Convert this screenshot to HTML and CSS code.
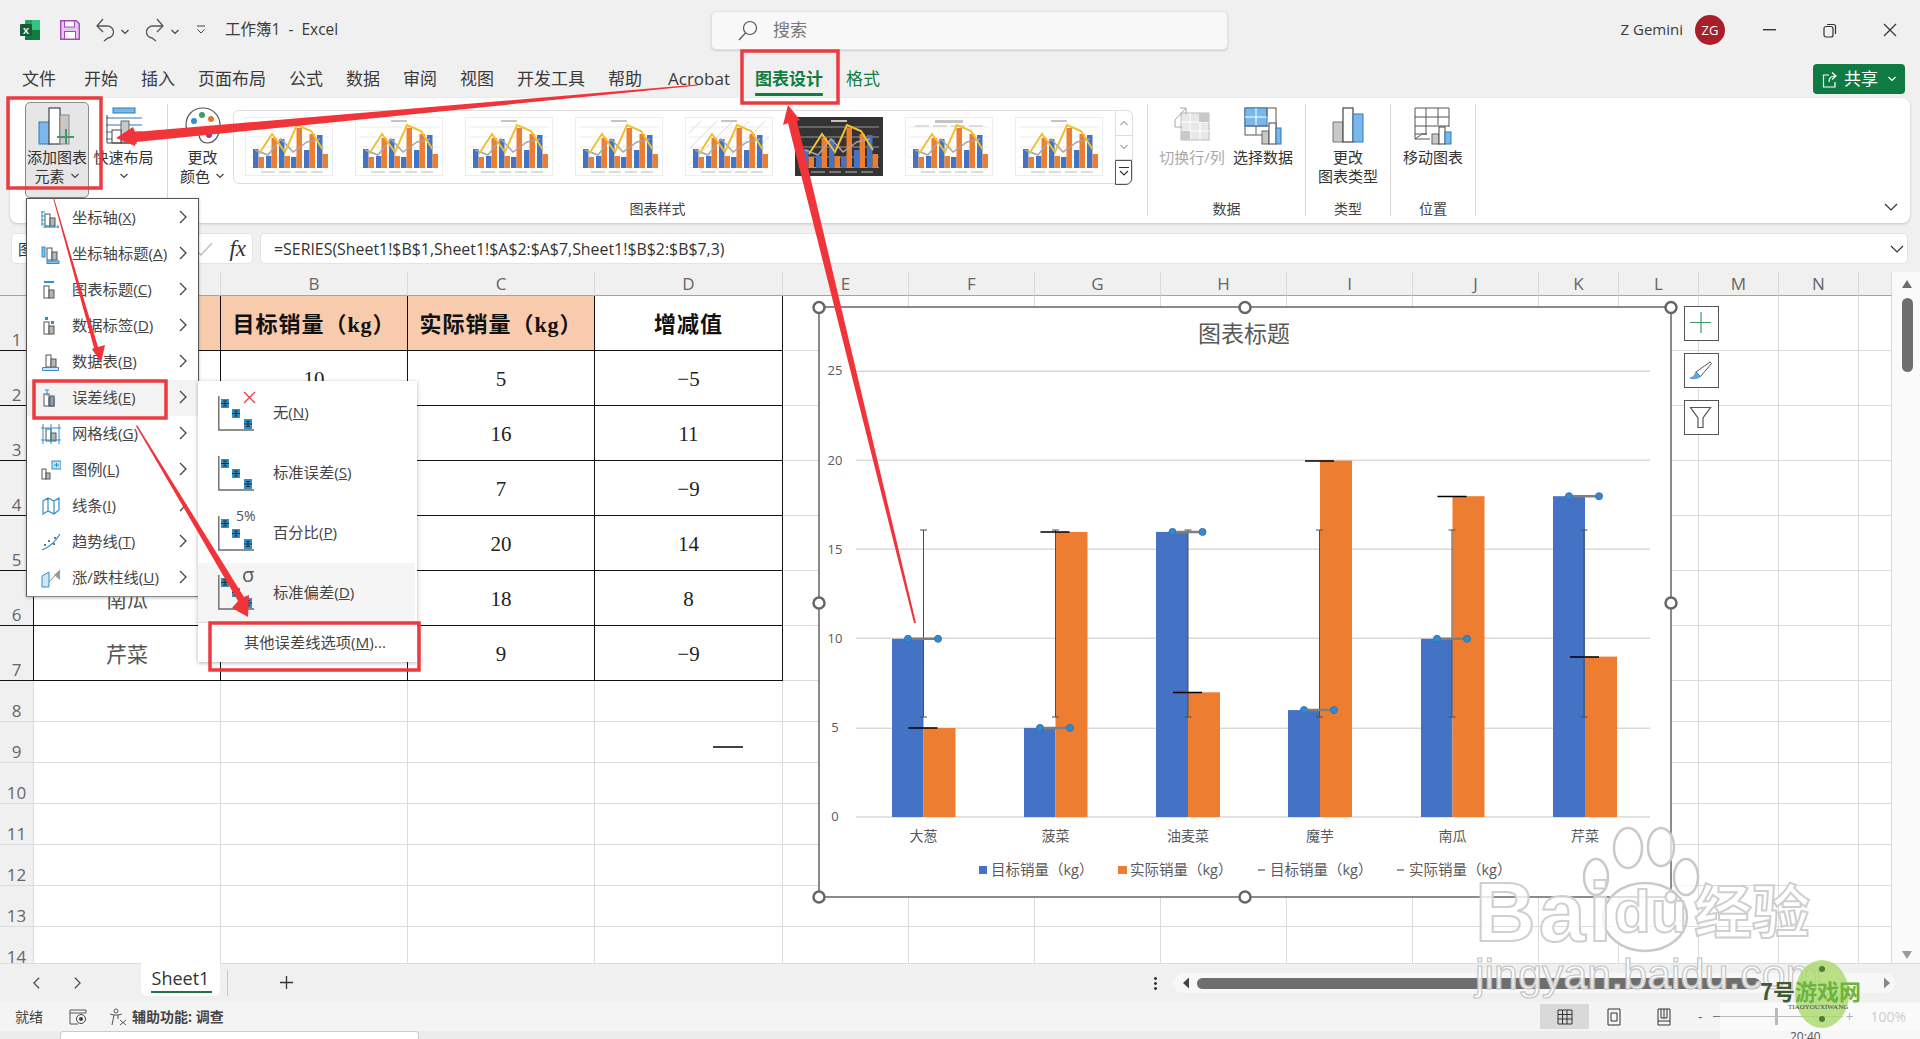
FILE: index.html
```html
<!DOCTYPE html>
<html lang="zh-CN">
<head>
<meta charset="utf-8">
<title>工作簿1 - Excel</title>
<link rel="stylesheet" href="styles.css">
</head>
<body>
<svg class="defs" width="0" height="0" aria-hidden="true">
  <defs>
    <symbol id="chev" viewBox="0 0 10 16"><path d="M2 2l6 6-6 6" fill="none" stroke="#444" stroke-width="1.3"/></symbol>
    <symbol id="caret" viewBox="0 0 10 6"><path d="M1.5 1l3.5 3.5L8.5 1" fill="none" stroke="#444" stroke-width="1.2"/></symbol>
    <symbol id="tb" viewBox="0 0 88 59">
      <g stroke="#dedede" stroke-width=".6"><path d="M4 10h80M4 20h80M4 30h80M4 40h80M4 50.500h80"/></g>
      <g fill="#4472c4"><rect x="8" y="32" width="5.500" height="19"/><rect x="21" y="39" width="5.500" height="12"/><rect x="34" y="22" width="5.500" height="29"/><rect x="46" y="40" width="5.500" height="11"/><rect x="59" y="33" width="5.500" height="18"/><rect x="72" y="18" width="5.500" height="33"/></g>
      <g fill="#ed7d31"><rect x="13.500" y="40" width="5.500" height="11"/><rect x="26.500" y="21" width="5.500" height="30"/><rect x="39.500" y="39" width="5.500" height="12"/><rect x="51.500" y="11" width="5.500" height="40"/><rect x="64.500" y="17" width="5.500" height="34"/><rect x="77.500" y="37" width="5.500" height="14"/></g>
      <path d="M10 33l13 5 13-16 12 13 14-10 13-3" fill="none" stroke="#a5a5a5" stroke-width="1.500"/>
      <path d="M14 37l13-20 13 18 12-27 14 6 12 19" fill="none" stroke="#efc033" stroke-width="2"/>
      <path d="M16 55h14M34 55h12M50 55h12M66 55h12" stroke="#bbb" stroke-width="1"/>
    </symbol>
    <symbol id="ebars" viewBox="0 0 37 35">
      <path d="M.8 0v34H36" fill="none" stroke="#6a6a6a" stroke-width="1.4"/>
      <g fill="#2f8fc8"><rect x="3" y="3" width="8" height="9"/><rect x="14" y="13" width="8" height="9"/><rect x="26" y="23" width="8" height="10"/></g>
      <path d="M3 7.500h8M7 5.500v4M5 5h4M5 10h4M14 17.500h8M18 15.500v4M16 15h4M16 20h4M26 28h8M30 26v4M28 25.500h4M28 30.500h4" stroke="#222" stroke-width=".9"/>
    </symbol>
    <symbol id="miniBars" viewBox="0 0 20 20">
      <rect x="4" y="6" width="5" height="12" fill="#fff" stroke="#555"/><rect x="9" y="10" width="5" height="8" fill="#b5b5b5" stroke="#555"/>
    </symbol>
    <symbol id="m1" viewBox="0 0 20 20"><use href="#miniBars"/><path d="M1 3v15M.5 4H4M.5 8H4M.5 12H4M.5 16H4M2 19h16M5 17v3M9 17v3M13 17v3M17 17v3" stroke="#2f8fc8" fill="none"/></symbol>
    <symbol id="m2" viewBox="0 0 20 20"><use href="#miniBars" x="2" y="-2"/><rect x="1" y="3" width="3" height="10" fill="#7ec0ee" stroke="#2f8fc8"/><rect x="6" y="17" width="12" height="2.500" fill="#7ec0ee" stroke="#2f8fc8"/></symbol>
    <symbol id="m3" viewBox="0 0 20 20"><use href="#miniBars" x="-1"/><path d="M3 2h10" stroke="#2f8fc8" stroke-width="2"/></symbol>
    <symbol id="m4" viewBox="0 0 20 20"><use href="#miniBars" x="-1"/><rect x="4" y="1" width="3" height="3" fill="#2f8fc8"/><rect x="10" y="5" width="3" height="3" fill="#2f8fc8"/></symbol>
    <symbol id="m5" viewBox="0 0 20 20"><use href="#miniBars" x="1" y="-3"/><path d="M1.500 15.500h16v3h-16z" fill="#cfe6f7" stroke="#2f8fc8"/></symbol>
    <symbol id="m6" viewBox="0 0 20 20"><use href="#miniBars" x="-1"/><path d="M6 2v6M4 2h4" stroke="#2f8fc8"/><rect x="9" y="8" width="4" height="10" fill="#7aa7c7" stroke="#555"/></symbol>
    <symbol id="m7" viewBox="0 0 20 20"><use href="#miniBars" x="1" y="-1"/><path d="M0 4h20M0 16h20M2 0v20M10 0v20M18 0v20" stroke="#2f8fc8" fill="none"/></symbol>
    <symbol id="m8" viewBox="0 0 20 20"><rect x="1" y="9" width="4" height="10" fill="#fff" stroke="#555"/><rect x="5" y="13" width="4" height="6" fill="#b5b5b5" stroke="#555"/><rect x="11" y="1" width="9" height="8" fill="#bfe0f7" stroke="#2f8fc8"/><path d="M13 5h5M15.500 3v4" stroke="#2f8fc8"/></symbol>
    <symbol id="m9" viewBox="0 0 20 20"><path d="M2 5l5-3 6 3 5-3v12l-5 4-6-3-5 3zM7 2v13M13 5v13" fill="none" stroke="#2f8fc8" stroke-width="1.200"/></symbol>
    <symbol id="m10" viewBox="0 0 20 20"><path d="M1 18C8 15 14 11 19 2" fill="none" stroke="#2f8fc8" stroke-width="1.200"/><g fill="#444"><circle cx="4" cy="13" r="1"/><circle cx="8" cy="9" r="1"/><circle cx="13" cy="12" r="1"/><circle cx="14" cy="6" r="1"/></g></symbol>
    <symbol id="m11" viewBox="0 0 20 20"><path d="M1 8l7-4v15H1z" fill="#cfe6f7" stroke="#2f8fc8"/><path d="M8 14l11-12" stroke="#888"/><path d="M13 7l6-5v10z" fill="#999"/></symbol>
  </defs>
</svg>

<div class="app">
  <header class="titlebar">
    <div class="tb-left">
      <svg class="ic-excel" width="20" height="20" viewBox="0 0 20 20"><rect x="5" width="15" height="20" rx="1" fill="#21a366"/><rect x="5" y="10" width="15" height="10" fill="#107c41"/><rect x="12" width="8" height="10" fill="#33c481"/><rect y="4" width="12" height="12" rx="1" fill="#185c37"/><text x="3" y="13.500" class="xl">X</text></svg>
      <svg class="ic-save" width="20" height="20" viewBox="0 0 20 20"><path d="M.7.7h15.500l3.100 3.100v15.500H.7z" fill="#e5c6ef" stroke="#a349b8" stroke-width="1.400"/><rect x="4.500" y="1" width="10" height="6" fill="#fff" stroke="#a349b8"/><rect x="4.500" y="11.500" width="11" height="7.500" fill="#fff" stroke="#a349b8"/></svg>
      <svg class="ic-undo" width="18" height="24" viewBox="0 0 18 24"><path d="M1 8h10a6 6 0 0 1 1 12l-4 3M7 1L1 8l6 6" fill="none" stroke="#555" stroke-width="1.300"/></svg>
      <svg class="cr c1" width="10" height="6"><use href="#caret"/></svg>
      <svg class="ic-undo r" width="18" height="24" viewBox="0 0 18 24"><path d="M17 8H7a6 6 0 0 0-1 12l4 3M11 1l6 7-6 6" fill="none" stroke="#555" stroke-width="1.300"/></svg>
      <svg class="cr c1" width="10" height="6"><use href="#caret"/></svg>
      <svg class="cr c2" width="10" height="10" viewBox="0 0 10 10"><path d="M1 1h8M1.500 4.500L5 8l3.500-3.500" fill="none" stroke="#444"/></svg>
      <span class="doc">工作簿1&nbsp; - &nbsp;Excel</span>
    </div>
    <div class="search">
      <svg width="20" height="22" viewBox="0 0 20 22"><circle cx="12" cy="8" r="6.500" fill="none" stroke="#555" stroke-width="1.200"/><path d="M7.500 13L1 20" stroke="#555" stroke-width="1.200"/></svg>
      <span>搜索</span>
    </div>
    <div class="tb-right">
      <span class="user">Z Gemini</span>
      <span class="avatar">ZG</span>
      <span class="winbtn"><svg width="14" height="2"><rect width="13" height="1.400" fill="#333"/></svg></span>
      <span class="winbtn"><svg width="14" height="15" viewBox="0 0 14 15"><rect x="1" y="3.500" width="9" height="10.500" rx="2" fill="none" stroke="#333" stroke-width="1.200"/><path d="M4 1.500h6.500a2 2 0 0 1 2 2V11" fill="none" stroke="#333" stroke-width="1.200"/></svg></span>
      <span class="winbtn"><svg width="14" height="14"><path d="M1 1l12 12M13 1L1 13" stroke="#333" stroke-width="1.200"/></svg></span>
    </div>
  </header>

  <nav class="tabs">
    <span class="tab first">文件</span><span class="tab">开始</span><span class="tab">插入</span><span class="tab">页面布局</span><span class="tab">公式</span><span class="tab">数据</span><span class="tab">审阅</span><span class="tab">视图</span><span class="tab">开发工具</span><span class="tab">帮助</span><span class="tab acro">Acrobat</span><span class="tab on">图表设计</span><span class="tab green">格式</span>
    <span class="share">
      <svg width="16" height="17" viewBox="0 0 16 17"><path d="M7 4H1.500v12h11.500v-5M7 11c0-4 2-6 6-6M10 1.500L14 5l-4 3.500" fill="none" stroke="#fff" stroke-width="1.200"/></svg>
      <b>共享</b>
      <svg class="cr" width="10" height="6" viewBox="0 0 10 6"><path d="M1.500 1l3.500 3.500L8.500 1" fill="none" stroke="#fff" stroke-width="1.200"/></svg>
    </span>
  </nav>

  <section class="ribbon">
    <div class="grp g1">
      <div class="row">
        <div class="rbtn add">
          <div class="ico"><svg width="38" height="38" viewBox="0 0 38 38"><rect x="1" y="15" width="11" height="22" fill="#7ab8ec" stroke="#2f78b7"/><rect x="11" y="1" width="11" height="36" fill="#fff" stroke="#444" stroke-width="1.200"/><rect x="22" y="8" width="9" height="29" fill="#c8c8c8" stroke="#888"/><path d="M28 22v15M19 30h17" stroke="#3f9a64" stroke-width="2"/></svg></div>
          <span>添加图表</span><span>元素 <svg class="cr" width="10" height="6"><use href="#caret"/></svg></span>
        </div>
        <div class="rbtn quick">
          <div class="ico"><svg width="36" height="38" viewBox="0 0 36 38"><rect x="7" y="1" width="22" height="5" fill="#7ab8ec" stroke="#2f78b7"/><path d="M0 11h36M0 18h36M0 25h36M0 32h36" stroke="#2f78b7"/><rect x="15" y="14" width="8" height="22" fill="#c8c8c8" stroke="#666"/><rect x="6" y="23" width="9" height="13" fill="#fff" stroke="#444"/><path d="M1 8v28h30" fill="none" stroke="#444"/></svg></div>
          <span>快速布局</span><span><svg class="cr" width="10" height="6"><use href="#caret"/></svg></span>
        </div>
      </div>
    </div>
    <i class="sep"></i>
    <div class="grp g2">
      <div class="row">
        <div class="rbtn color">
          <div class="ico"><svg width="36" height="37" viewBox="0 0 36 37"><path d="M18 1C8 1 1 8 1 18c0 6 5 6 9 5 3-1 4 1 4 4 0 5 3 9 8 9 9 0 13-9 13-18S28 1 18 1z" fill="#fff" stroke="#555" stroke-width="1.200"/><circle cx="9" cy="14" r="3" fill="#2f8fc8"/><circle cx="17" cy="8" r="3" fill="#3f9a64"/><circle cx="26" cy="12" r="3" fill="#e07a2b"/><circle cx="24" cy="28" r="3" fill="#8a3fa0"/></svg></div>
          <span>更改</span><span>颜色 <svg class="cr" width="10" height="6"><use href="#caret"/></svg></span>
        </div>
        <div class="gallery">
          <svg class="thumb" viewBox="0 0 88 59"><rect class="tbg" width="88" height="59"/><use href="#tb"/></svg>
          <svg class="thumb" viewBox="0 0 88 59"><rect class="tbg" width="88" height="59"/><rect class="ttl" x="36" y="3" width="16" height="2"/><use href="#tb"/></svg>
          <svg class="thumb" viewBox="0 0 88 59"><rect class="tbg" width="88" height="59"/><rect class="ttl" x="36" y="3" width="16" height="2"/><use href="#tb"/></svg>
          <svg class="thumb" viewBox="0 0 88 59"><rect class="tbg" width="88" height="59"/><rect class="ttl" x="36" y="3" width="16" height="2"/><use href="#tb"/></svg>
          <svg class="thumb" viewBox="0 0 88 59"><rect class="tbg" width="88" height="59"/><path class="hatch" d="M4 16L16 4M4 32L32 4M4 48L48 4M14 54L64 4M30 54L80 4M46 54L84 20M62 54L84 36"/><rect class="ttl" x="36" y="3" width="16" height="2"/><use href="#tb"/></svg>
          <svg class="thumb" viewBox="0 0 88 59"><rect class="tdark" width="88" height="59"/><rect class="ttl" x="36" y="3" width="16" height="2"/><use href="#tb"/></svg>
          <svg class="thumb" viewBox="0 0 88 59"><rect class="tbg" width="88" height="59"/><rect class="ttl" x="30" y="3" width="28" height="3"/><path d="M10 9h14M28 9h14M46 9h14M64 9h14" stroke="#bbb"/><use href="#tb"/></svg>
          <svg class="thumb" viewBox="0 0 88 59"><rect class="tbg" width="88" height="59"/><rect class="ttl" x="36" y="3" width="16" height="2"/><use href="#tb"/></svg>
          <div class="gscroll">
            <span><svg width="10" height="6" viewBox="0 0 10 6"><path d="M1.500 5L5 1.500 8.500 5" fill="none" stroke="#aaa" stroke-width="1.200"/></svg></span>
            <span><svg width="10" height="6" viewBox="0 0 10 6"><path d="M1.500 1L5 4.500 8.500 1" fill="none" stroke="#aaa" stroke-width="1.200"/></svg></span>
            <span class="more"><svg width="12" height="12" viewBox="0 0 12 12"><path d="M1 1.500h10M2 5l4 4 4-4" fill="none" stroke="#333" stroke-width="1.200"/></svg></span>
          </div>
        </div>
      </div>
      <div class="glabel">图表样式</div>
    </div>
    <i class="sep"></i>
    <div class="grp g3">
      <div class="row">
        <div class="rbtn off">
          <div class="ico"><svg width="36" height="34" viewBox="0 0 36 34"><rect x="7" y="6" width="28" height="27" fill="#e8e8e8" stroke="#bbb"/><path d="M7 15h28M7 24h28M16 6v27M26 6v27" stroke="#fff"/><rect x="25" y="6" width="10" height="9" fill="#c8c8c8"/><rect x="7" y="24" width="9" height="9" fill="#c8c8c8"/><path d="M1 13L12 1v6M12 1H6M1 13v7h7" fill="none" stroke="#a8a8a8"/></svg></div>
          <span>切换行/列</span>
        </div>
        <div class="rbtn">
          <div class="ico"><svg width="38" height="38" viewBox="0 0 38 38"><rect x="1" y="1" width="31" height="27" fill="#fff" stroke="#555"/><rect x="1" y="1" width="22" height="18" fill="#7ab8ec" stroke="#2f78b7"/><path d="M1 10h22M12 1v18" stroke="#fff"/><path d="M1 19h31M12 19v9M23 1v9" stroke="#666"/><rect x="18" y="24" width="7" height="13" fill="#c8c8c8" stroke="#666"/><rect x="25" y="16" width="7" height="21" fill="#fff" stroke="#444"/><rect x="32" y="21" width="5" height="16" fill="#7ab8ec" stroke="#2f78b7"/></svg></div>
          <span>选择数据</span>
        </div>
      </div>
      <div class="glabel">数据</div>
    </div>
    <i class="sep"></i>
    <div class="grp g4">
      <div class="row">
        <div class="rbtn">
          <div class="ico"><svg width="32" height="36" viewBox="0 0 32 36"><rect x="1" y="15" width="10" height="20" fill="#c8c8c8" stroke="#777"/><rect x="11" y="1" width="10" height="34" fill="#fff" stroke="#444" stroke-width="1.200"/><rect x="21" y="7" width="10" height="28" fill="#7ab8ec" stroke="#2f78b7"/></svg></div>
          <span>更改</span><span>图表类型</span>
        </div>
      </div>
      <div class="glabel">类型</div>
    </div>
    <i class="sep"></i>
    <div class="grp g5">
      <div class="row">
        <div class="rbtn">
          <div class="ico"><svg width="38" height="38" viewBox="0 0 38 38"><path d="M1 1h34v19M1 1v31h15M1 10h34M1 19h34M1 27h12M12 1v26M24 1v17" fill="none" stroke="#555"/><path d="M1 32l7-5h5" fill="none" stroke="#555"/><rect x="18" y="27" width="7" height="10" fill="#c8c8c8" stroke="#666"/><rect x="25" y="20" width="6" height="17" fill="#fff" stroke="#444"/><rect x="31" y="25" width="6" height="12" fill="#7ab8ec" stroke="#2f78b7"/></svg></div>
          <span>移动图表</span>
        </div>
      </div>
      <div class="glabel">位置</div>
    </div>
    <i class="sep"></i>
    <svg class="collapse" width="14" height="8" viewBox="0 0 14 8"><path d="M1 1l6 6 6-6" fill="none" stroke="#333" stroke-width="1.200"/></svg>
  </section>

  <div class="formula">
    <div class="namebox">
      <span class="nm">图</span>
      <svg class="chk" width="18" height="14" viewBox="0 0 18 14"><path d="M1 8l5 5L17 1" fill="none" stroke="#bdbdbd" stroke-width="1.300"/></svg>
      <span class="fx">fx</span>
    </div>
    <div class="finput">
      <span>=SERIES(Sheet1!$B$1,Sheet1!$A$2:$A$7,Sheet1!$B$2:$B$7,3)</span>
      <svg width="14" height="8" viewBox="0 0 14 8"><path d="M1 1l6 6 6-6" fill="none" stroke="#333" stroke-width="1.200"/></svg>
    </div>
  </div>

  <main class="sheet">
    <table class="grid">
      <colgroup><col class="c0"><col class="cw"><col class="cw"><col class="cw"><col class="cx"><col class="cm"><col class="cm"><col class="cm"><col class="cm"><col class="cm"><col class="cm"><col class="cs"><col class="cs"><col class="cs"><col class="cs"><col class="cl"></colgroup>
      <thead>
        <tr class="rh"><th class="corner"></th><th></th><th>B</th><th>C</th><th>D</th><th>E</th><th>F</th><th>G</th><th>H</th><th>I</th><th>J</th><th>K</th><th>L</th><th>M</th><th>N</th><th></th></tr>
      </thead>
      <tbody>
        <tr class="r55"><th class="k">1</th><td class="k p"></td><td class="k p h">目标销量（kg）</td><td class="k p h">实际销量（kg）</td><td class="k h">增减值</td><td></td><td></td><td></td><td></td><td></td><td></td><td></td><td></td><td></td><td></td><td></td></tr>
        <tr class="r55"><th class="k">2</th><td class="k t"></td><td class="k n">10</td><td class="k n">5</td><td class="k n">−5</td><td></td><td></td><td></td><td></td><td></td><td></td><td></td><td></td><td></td><td></td><td></td></tr>
        <tr class="r55"><th class="k">3</th><td class="k t"></td><td class="k n"></td><td class="k n">16</td><td class="k n">11</td><td></td><td></td><td></td><td></td><td></td><td></td><td></td><td></td><td></td><td></td><td></td></tr>
        <tr class="r55"><th class="k">4</th><td class="k t"></td><td class="k n"></td><td class="k n">7</td><td class="k n">−9</td><td></td><td></td><td></td><td></td><td></td><td></td><td></td><td></td><td></td><td></td><td></td></tr>
        <tr class="r55"><th class="k">5</th><td class="k t"></td><td class="k n"></td><td class="k n">20</td><td class="k n">14</td><td></td><td></td><td></td><td></td><td></td><td></td><td></td><td></td><td></td><td></td><td></td></tr>
        <tr class="r55"><th class="k">6</th><td class="k t">南瓜</td><td class="k n"></td><td class="k n">18</td><td class="k n">8</td><td></td><td></td><td></td><td></td><td></td><td></td><td></td><td></td><td></td><td></td><td></td></tr>
        <tr class="r55"><th class="k">7</th><td class="k t">芹菜</td><td class="k n"></td><td class="k n">9</td><td class="k n">−9</td><td></td><td></td><td></td><td></td><td></td><td></td><td></td><td></td><td></td><td></td><td></td></tr>
        <tr class="r41"><th>8</th><td></td><td></td><td></td><td></td><td></td><td></td><td></td><td></td><td></td><td></td><td></td><td></td><td></td><td></td><td></td></tr>
        <tr class="r41"><th>9</th><td></td><td></td><td></td><td class="dashcell"><i class="dash"></i></td><td></td><td></td><td></td><td></td><td></td><td></td><td></td><td></td><td></td><td></td><td></td></tr>
        <tr class="r41"><th>10</th><td></td><td></td><td></td><td></td><td></td><td></td><td></td><td></td><td></td><td></td><td></td><td></td><td></td><td></td><td></td></tr>
        <tr class="r41"><th>11</th><td></td><td></td><td></td><td></td><td></td><td></td><td></td><td></td><td></td><td></td><td></td><td></td><td></td><td></td><td></td></tr>
        <tr class="r41"><th>12</th><td></td><td></td><td></td><td></td><td></td><td></td><td></td><td></td><td></td><td></td><td></td><td></td><td></td><td></td><td></td></tr>
        <tr class="r41"><th>13</th><td></td><td></td><td></td><td></td><td></td><td></td><td></td><td></td><td></td><td></td><td></td><td></td><td></td><td></td><td></td></tr>
        <tr class="r41"><th>14</th><td></td><td></td><td></td><td></td><td></td><td></td><td></td><td></td><td></td><td></td><td></td><td></td><td></td><td></td><td></td></tr>
      </tbody>
    </table>
    <div class="vscroll">
      <svg width="12" height="10" viewBox="0 0 12 10"><path d="M6 1l5 8H1z" fill="#6e6e6e"/></svg>
      <i class="vthumb"></i>
      <svg class="vdown" width="12" height="10" viewBox="0 0 12 10"><path d="M6 9L1 1h10z" fill="#9a9a9a"/></svg>
    </div>

    <svg class="chart" width="920" height="612" viewBox="805 297 920 612">
      <rect x="819" y="307" width="852" height="590" fill="#fff"/>
      <g stroke="#d9d9d9" stroke-width="1.500"><path d="M856 371.300H1650M856 460.300H1650M856 549.300H1650M856 638.300H1650M856 728.300H1650M856 817H1650"/></g>
      <g class="axis" text-anchor="middle"><text x="835" y="375">25</text><text x="835" y="465">20</text><text x="835" y="554">15</text><text x="835" y="643">10</text><text x="835" y="732">5</text><text x="835" y="821">0</text></g>
      <text class="ctitle" x="1244" y="342" text-anchor="middle">图表标题</text>
      <g fill="#4472c4"><rect x="892" y="638.800" width="31.500" height="178.200"/><rect x="1024" y="727.900" width="31.500" height="89.100"/><rect x="1156" y="531.900" width="32" height="285.100"/><rect x="1288" y="710.100" width="32" height="106.900"/><rect x="1421" y="638.800" width="31.500" height="178.200"/><rect x="1553" y="496.200" width="32" height="320.800"/></g>
      <g fill="#ed7d31"><rect x="923.500" y="727.900" width="32" height="89.100"/><rect x="1055.500" y="531.900" width="32" height="285.100"/><rect x="1188" y="692.300" width="32" height="124.700"/><rect x="1320" y="460.600" width="32" height="356.400"/><rect x="1452.500" y="496.200" width="32" height="320.800"/><rect x="1585" y="656.600" width="32" height="160.400"/></g>
      <g stroke="#4d4d4d" stroke-width="1" fill="none"><path d="M923.500 530V717M920 530h7M920 717h7M1055.500 530V717M1052 530h7M1052 717h7M1188 530V717M1184.500 530h7M1184.500 717h7M1319.500 530V717M1316 530h7M1316 717h7M1452 530V717M1448.500 530h7M1448.500 717h7M1584 530V717M1580.500 530h7M1580.500 717h7"/></g>
      <g stroke="#000" stroke-width="1.500"><path d="M908.500 728h29M1040.500 532h29M1173 692.500h29M1305 461h29M1437.500 496.500h29M1570 657h29"/></g>
      <g stroke="#7f7f7f" stroke-width="2.500"><path d="M908 638.800h30M1040 727.900h30M1172.500 531.900h30M1304 710.100h30M1437 638.800h30M1569 496.200h30"/></g>
      <g fill="#2e8bd0" stroke="#3f6fb0"><circle cx="908" cy="638.800" r="3.500"/><circle cx="938" cy="638.800" r="3.500"/><circle cx="1040" cy="727.900" r="3.500"/><circle cx="1070" cy="727.900" r="3.500"/><circle cx="1172.500" cy="531.900" r="3.500"/><circle cx="1202.500" cy="531.900" r="3.500"/><circle cx="1304" cy="710.100" r="3.500"/><circle cx="1334" cy="710.100" r="3.500"/><circle cx="1437" cy="638.800" r="3.500"/><circle cx="1467" cy="638.800" r="3.500"/><circle cx="1569" cy="496.200" r="3.500"/><circle cx="1599" cy="496.200" r="3.500"/></g>
      <g class="cat" text-anchor="middle"><text x="923.500" y="841">大葱</text><text x="1055.500" y="841">菠菜</text><text x="1188" y="841">油麦菜</text><text x="1320" y="841">魔芋</text><text x="1452.500" y="841">南瓜</text><text x="1585" y="841">芹菜</text></g>
      <rect x="979" y="866" width="8" height="8" fill="#4472c4"/><rect x="1118" y="866" width="9" height="8" fill="#ed7d31"/>
      <path d="M1258 870h7M1397 870h7" stroke="#333" stroke-width="1.200"/>
      <g class="legend"><text x="991" y="875">目标销量（kg）</text><text x="1130" y="875">实际销量（kg）</text><text x="1270" y="875">目标销量（kg）</text><text x="1409" y="875">实际销量（kg）</text></g>
      <rect x="819" y="307" width="852" height="590" fill="none" stroke="#666" stroke-width="1.500"/>
      <g fill="#fff" stroke="#666" stroke-width="2.500"><circle cx="819" cy="307.500" r="5.500"/><circle cx="1245" cy="307.500" r="5.500"/><circle cx="1671" cy="307.500" r="5.500"/><circle cx="819" cy="603" r="5.500"/><circle cx="1671" cy="603" r="5.500"/><circle cx="819" cy="897" r="5.500"/><circle cx="1245" cy="897" r="5.500"/><circle cx="1671" cy="897" r="5.500"/></g>
      <g fill="#fff" stroke="#555"><rect x="1684.500" y="306.500" width="34" height="34"/><rect x="1684.500" y="353.500" width="34" height="34"/><rect x="1684.500" y="400.500" width="34" height="34"/></g>
      <path d="M1701 312v21M1690 322.500h21" stroke="#3f9a64" stroke-width="1.200"/>
      <path d="M1696 372l14-10 1.500 1.500-11 13z" fill="#fff" stroke="#555"/><path d="M1696 371.500c-1 4-3 6-6 6.500 4 1.500 8 .5 10.500-1.500z" fill="#5aa9e6" stroke="#2f78b7" stroke-width=".6"/>
      <path d="M1690.500 407.500h20l-7.500 10.500v9.500h-5V418z" fill="#fff" stroke="#555" stroke-width="1.200"/>
    </svg>
  </main>

  <div class="sheetbar">
    <svg class="nav n1" width="9" height="14"><use href="#chev" transform="matrix(-1 0 0 1 9 0)"/></svg>
    <svg class="nav n2" width="9" height="14"><use href="#chev"/></svg>
    <div class="stab">Sheet1</div>
    <i class="sdiv"></i>
    <svg class="plus" width="15" height="15"><path d="M7.500 1v13M1 7.500h13" stroke="#333" stroke-width="1.300"/></svg>
    <div class="hs">
      <i class="kebab"></i>
      <div class="htrack">
        <svg width="7" height="12" viewBox="0 0 7 12"><path d="M1 6l6-5.500v11z" fill="#444"/></svg>
        <i class="hthumb"></i>
        <svg class="hr" width="7" height="12" viewBox="0 0 7 12"><path d="M6 6L0 .5v11z" fill="#888"/></svg>
      </div>
    </div>
  </div>

  <footer class="status">
    <span class="ready">就绪</span>
    <svg class="st-ic" width="18" height="16" viewBox="0 0 18 16"><path d="M1 1h16v3H1zM1 4v11h8" fill="none" stroke="#555"/><circle cx="12" cy="10" r="4.500" fill="none" stroke="#444"/><circle cx="12" cy="10" r="2" fill="#444"/></svg>
    <svg class="st-acc" width="18" height="18" viewBox="0 0 18 18"><circle cx="7" cy="3" r="2" fill="none" stroke="#555"/><path d="M1 6l4 1h4l4-1M5 7l-1 5-1 5M9 7v4M11 12l6 5M17 12l-6 5" fill="none" stroke="#555"/></svg>
    <span class="acc">辅助功能: 调查</span>
    <div class="views">
      <span class="vw sel"><svg width="16" height="16" viewBox="0 0 16 16"><path d="M1 1h14v14H1zM1 5.500h14M1 10h14M5.500 1v14M10 1v14" fill="none" stroke="#333"/></svg></span>
      <span class="vw"><svg width="16" height="18" viewBox="0 0 16 18"><path d="M2 1h12v16H2zM5 5h6v8H5z" fill="none" stroke="#333"/></svg></span>
      <span class="vw"><svg width="16" height="18" viewBox="0 0 16 18"><path d="M2 1h12v16H2zM8 1v9M5 1v9h6V1M2 13h12" fill="none" stroke="#333"/></svg></span>
    </div>
    <div class="zoomer">
      <span>-</span><i class="ztrack"><i class="zknob"></i></i><span>+</span><span class="pct">100%</span>
    </div>
  </footer>
  <div class="bottom"><div class="bottom-panel"></div></div>

  <!-- context menus -->
  <div class="menu m-main">
    <div class="mi"><svg width="20" height="20"><use href="#m1"/></svg><span>坐标轴(<u>X</u>)</span><svg class="mc" width="10" height="16"><use href="#chev"/></svg></div>
    <div class="mi"><svg width="20" height="20"><use href="#m2"/></svg><span>坐标轴标题(<u>A</u>)</span><svg class="mc" width="10" height="16"><use href="#chev"/></svg></div>
    <div class="mi"><svg width="20" height="20"><use href="#m3"/></svg><span>图表标题(<u>C</u>)</span><svg class="mc" width="10" height="16"><use href="#chev"/></svg></div>
    <div class="mi"><svg width="20" height="20"><use href="#m4"/></svg><span>数据标签(<u>D</u>)</span><svg class="mc" width="10" height="16"><use href="#chev"/></svg></div>
    <div class="mi"><svg width="20" height="20"><use href="#m5"/></svg><span>数据表(<u>B</u>)</span><svg class="mc" width="10" height="16"><use href="#chev"/></svg></div>
    <div class="mi hov"><svg width="20" height="20"><use href="#m6"/></svg><span>误差线(<u>E</u>)</span><svg class="mc" width="10" height="16"><use href="#chev"/></svg></div>
    <div class="mi"><svg width="20" height="20"><use href="#m7"/></svg><span>网格线(<u>G</u>)</span><svg class="mc" width="10" height="16"><use href="#chev"/></svg></div>
    <div class="mi"><svg width="20" height="20"><use href="#m8"/></svg><span>图例(<u>L</u>)</span><svg class="mc" width="10" height="16"><use href="#chev"/></svg></div>
    <div class="mi"><svg width="20" height="20"><use href="#m9"/></svg><span>线条(<u>I</u>)</span><svg class="mc" width="10" height="16"><use href="#chev"/></svg></div>
    <div class="mi"><svg width="20" height="20"><use href="#m10"/></svg><span>趋势线(<u>T</u>)</span><svg class="mc" width="10" height="16"><use href="#chev"/></svg></div>
    <div class="mi"><svg width="20" height="20"><use href="#m11"/></svg><span>涨/跌柱线(<u>U</u>)</span><svg class="mc" width="10" height="16"><use href="#chev"/></svg></div>
  </div>
  <div class="menu m-sub">
    <div class="si"><div class="eb"><svg width="37" height="35"><use href="#ebars"/></svg><svg class="ex" width="13" height="13"><path d="M1 1l11 11M12 1L1 12" stroke="#e04050" stroke-width="1.300"/></svg></div><span>无(<u>N</u>)</span></div>
    <div class="si"><div class="eb"><svg width="37" height="35"><use href="#ebars"/></svg></div><span>标准误差(<u>S</u>)</span></div>
    <div class="si"><div class="eb"><svg width="37" height="35"><use href="#ebars"/></svg><b class="ex pc">5%</b></div><span>百分比(<u>P</u>)</span></div>
    <div class="si hov"><div class="eb"><svg width="37" height="35"><use href="#ebars"/></svg><b class="ex sg">σ</b></div><span>标准偏差(<u>D</u>)</span></div>
    <div class="si more">其他误差线选项(<u>M</u>)...</div>
  </div>

  <!-- annotations -->
  <svg class="notes" width="1920" height="1039" viewBox="0 0 1920 1039">
    <g fill="none" stroke="#ec3a40" stroke-width="3.500">
      <rect x="8" y="98" width="93" height="90"/>
      <rect x="742" y="51" width="96" height="52"/>
      <rect x="34" y="381" width="132" height="37"/>
      <rect x="210" y="623" width="209" height="47"/>
    </g>
    <g fill="#f0343a">
      <path d="M697 84.500L135 132l-2-5-17 11 19 8 1-4L698 85.500z"/>
      <path d="M788 105l12 15-3 1L916 623h-2L788 123l-5 2z"/>
      <path d="M54 198l44 149 7-2-4 18-9-14 2-1-41-150z"/>
      <path d="M137 425l107 172 5-2-1 22-16-9 6-7L136 426z"/>
    </g>
  </svg>

  <!-- watermarks -->
  <div class="wm">
    <svg class="paw" width="125" height="130" viewBox="0 0 125 130"><g fill="#fff" fill-opacity=".7" stroke="#c9c9c9" stroke-width="2.500"><ellipse cx="53" cy="23" rx="14" ry="20"/><ellipse cx="86" cy="22" rx="13" ry="19"/><ellipse cx="21" cy="52" rx="12" ry="18"/><ellipse cx="111" cy="52" rx="12" ry="18"/><ellipse cx="70" cy="92" rx="42" ry="34"/></g></svg>
    <span class="bai">Bai</span><span class="du">du</span><span class="jy">经验</span>
    <span class="url">jingyan.baidu.com</span>
    <div class="corner-wash"></div>
    <svg class="leaf" width="56" height="70" viewBox="0 0 56 70"><ellipse cx="28" cy="35" rx="27" ry="34" fill="#a9d96a" fill-opacity=".8"/><circle cx="28" cy="10" r="3" fill="#4c7d34"/><circle cx="28" cy="60" r="3" fill="#4c7d34"/></svg>
    <div class="brand"><span class="b7">7号</span><span class="bg">游戏网</span></div>
    <span class="brandsub">TIAOYOUXIWANG</span>
    <span class="clock">20:40</span>
  </div>
</div>
</body>
</html>
```

FILE: styles.css
```css
* { box-sizing: border-box; }
html, body { margin: 0; padding: 0; height: 100%; overflow: hidden; }
body {
  background: #f0f0f0;
  color: #333;
  font-family: "Open Sans", "Noto Sans CJK SC", sans-serif;
  font-size: 15px;
}
.defs { position: absolute; }
.app { position: relative; width: 1920px; height: 1039px; overflow: hidden; display: flex; flex-direction: column; }
svg { display: block; flex: none; }
.cr { display: inline-block; }

/* title bar */
.titlebar { height: 60px; display: flex; align-items: center; }
.tb-left { width: 711px; display: flex; align-items: center; padding-left: 20px; }
.ic-save { margin-left: 20px; }
.ic-undo { margin-left: 16px; }
.ic-undo.r { margin-left: 16px; }
.c1 { margin-left: 6px; margin-top: 3px; }
.c2 { margin-left: 16px; }
.doc { margin-left: 19px; padding-bottom: 2px; font-size: 15.500px; color: #3a3a3a; line-height: 20px; white-space: nowrap; }
.xl { font: bold 9px "Open Sans", sans-serif; fill: #fff; }
.search {
  width: 517px; height: 39px; margin-top: 1px; background: #f8f8f8; border: 1px solid #e2e2e2; border-radius: 5px;
  box-shadow: 0 1px 2px rgba(0, 0, 0, .15); display: flex; align-items: center; padding-left: 26px; color: #777; font-size: 17px;
}
.search span { margin-left: 15px; padding-bottom: 4px; }
.tb-right { margin-left: auto; display: flex; align-items: center; }
.user { font-size: 15px; color: #3a3a3a; margin-right: 12px; padding-bottom: 2px; }
.avatar { width: 30px; height: 30px; border-radius: 50%; background: #a81e2b; color: #fff; font-size: 13px; display: flex; align-items: center; justify-content: center; margin-right: 15px; }
.winbtn { width: 60px; display: flex; justify-content: center; align-items: center; }

/* tabs */
.tabs { height: 38px; display: flex; align-items: flex-start; gap: 23px; padding: 3px 15px 0 22px; }
.tab { position: relative; font-size: 17px; line-height: 32px; color: #3a3a3a; white-space: nowrap; }
.tab.first { margin-right: 5px; }
.tab.acro { margin-left: 3px; }
.tab.on { color: #107c41; font-weight: 700; margin-left: 2px; }
.tab.on::after { content: ""; position: absolute; left: 0; right: 0; bottom: -1px; height: 3px; background: #107c41; border-radius: 1px; }
.tab.green { color: #107c41; }
.share { margin-left: auto; margin-top: 1px; width: 92px; height: 30px; background: #0f7b43; border-radius: 4px; display: flex; align-items: center; color: #fff; padding-left: 9px; }
.share b { font-weight: 400; font-size: 17px; margin-left: 6px; line-height: 30px; }
.share .cr { margin-left: 9px; }

/* ribbon */
.ribbon { height: 125px; margin: 0 10px; padding-top: 4px; background: #fff; border-radius: 8px; box-shadow: 0 1px 3px rgba(0, 0, 0, .18); display: flex; flex: none; }
.sep { width: 1px; height: 112px; margin-top: 2px; background: #d9d9d9; flex: none; }
.grp { display: flex; flex-direction: column; flex: none; }
.row { display: flex; height: 96px; }
.glabel { margin-top: 1px; line-height: 20px; text-align: center; font-size: 14px; color: #444; }
.g1 { width: 157px; padding-left: 15px; }
.g1 .row { gap: 5px; }
.g2 { width: 979px; }
.g3 { width: 157px; }
.g3 .row { padding-left: 12px; gap: 7px; }
.g4, .g5 { width: 84px; }
.g4 .row, .g5 .row { justify-content: center; }
.rbtn { width: 64px; display: flex; flex-direction: column; align-items: center; font-size: 15px; line-height: 20px; color: #333; white-space: nowrap; }
.rbtn .ico { height: 45px; padding-top: 5px; display: flex; justify-content: center; }
.rbtn span { display: flex; align-items: center; gap: 5px; height: 19px; }
.rbtn.add { background: #e6e6e6; border: 1px solid #8a8a8a; border-radius: 5px; height: 96px; width: 64px; margin-top: 0; }
.rbtn.add .ico { height: 44px; padding-top: 4px; }
.rbtn.quick { width: 59px; }
.rbtn.color { width: 61px; margin-left: 4px; }
.rbtn.off { color: #a8a8a8; }
.gallery { width: 900px; height: 74px; margin-top: 8px; border: 1px solid #dedede; border-radius: 6px; display: flex; gap: 22px; padding: 6px 0 0 11px; position: relative; }
.thumb { width: 88px; height: 59px; }
.tbg { fill: #fff; stroke: #dcdcdc; }
.tdark { fill: #333; }
.ttl { fill: #c4c4c4; }
.hatch { stroke: #dcdcdc; stroke-width: 1; fill: none; }
.gscroll { margin-left: -10px; margin-top: -6px; width: 18px; height: 74px; display: flex; flex-direction: column; }
.gscroll span { height: 24.500px; display: flex; align-items: center; justify-content: center; border-left: 1px solid #dedede; border-bottom: 1px solid #dedede; flex: none; }
.gscroll .more { border: 1px solid #555; border-radius: 0 0 6px 0; border-right: 1px solid #555; }
.collapse { margin: auto 12px 12px auto; }

/* formula bar */
.formula { display: flex; gap: 7px; height: 31px; margin: 10px 12px 0 11px; flex: none; }
.namebox, .finput { background: #fff; border: 1px solid #e3e3e3; border-radius: 5px; display: flex; align-items: center; }
.namebox { width: 242px; padding-left: 6px; color: #333; }
.nm { font-size: 15px; }
.chk { margin-left: auto; }
.fx { font: italic 400 23px "Liberation Serif", serif; color: #333; margin: 0 6px 0 16px; }
.finput { flex: 1; justify-content: space-between; padding: 0 3px 0 13px; font-size: 15.900px; color: #333; white-space: nowrap; }

/* sheet */
.sheet { position: relative; height: 691px; margin-top: 8px; display: flex; overflow: hidden; flex: none; }
.grid { width: 1892px; table-layout: fixed; border-collapse: separate; border-spacing: 0; flex: none; background: #fff; align-self: flex-start; }
.c0 { width: 34px; } .cw { width: 187px; } .cx { width: 188px; } .cm { width: 126px; } .cs { width: 80px; } .cl { width: 33px; }
.grid td, .grid th { padding: 0; overflow: hidden; white-space: nowrap; border-right: 1px solid #dcdcdc; border-bottom: 1px solid #dcdcdc; }
.grid thead th { background: #f0f0f0; font-weight: 400; font-size: 17px; line-height: 22px; color: #666; border-right-color: #dadada; border-bottom-color: #a3a3a3; }
.rh { height: 24px; }
.r55 { height: 55px; }
.r41 { height: 41px; }
.grid tbody th { background: #f0f0f0; font-weight: 400; font-size: 17px; line-height: 20px; color: #666; vertical-align: bottom; padding-bottom: 0; }
.grid .k { border-right-color: #111; border-bottom-color: #111; }
.grid .p { background: #f8cbad; }
.grid td.h { text-align: center; font: 700 22px/30px "Liberation Serif", "Noto Sans CJK SC", serif; letter-spacing: 1px; color: #111; padding-top: 3px; }
.grid td.n { text-align: center; font: 21px/26px "Liberation Serif", serif; color: #222; padding-top: 2px; }
.grid td.t { text-align: center; font: 21px/28px "Noto Sans CJK SC", sans-serif; color: #555; }
.dashcell { position: relative; }
.dash { position: absolute; left: 118px; top: 24px; width: 30px; height: 2px; background: #444; }
.vscroll { width: 28px; height: 691px; background: #fafafa; display: flex; flex-direction: column; align-items: center; padding-top: 7px; }
.vscroll svg { margin-left: 2px; }
.vthumb { width: 11px; height: 74px; margin-top: 9px; margin-left: 2px; border-radius: 6px; background: #6e6e6e; }
.vdown { margin-top: auto; margin-bottom: 3px; }
.chart { position: absolute; left: 805px; top: 25px; }
.chart text { font-family: "Open Sans", "Noto Sans CJK SC", sans-serif; fill: #595959; }
.axis { font-size: 13px; }
.ctitle { font-size: 23px; }
.cat { font-size: 14px; }
.legend { font-size: 14.500px; }

/* sheet tabs */
.sheetbar { height: 39px; flex: none; display: flex; align-items: center; border-top: 1px solid #dcdcdc; background: #f0f0f0; }
.nav { margin-top: -1px; }
.n1 { margin-left: 32px; }
.n2 { margin-left: 32px; }
.stab { width: 79px; height: 35px; margin: -3px 0 0 59px; align-self: flex-start; background: #fff; border-radius: 0 0 7px 7px; text-align: center; font-size: 18px; line-height: 34px; color: #333; position: relative; }
.stab::after { content: ""; position: absolute; left: 10px; right: 8px; bottom: 3px; height: 2px; background: #217346; }
.sdiv { width: 1px; height: 26px; margin-left: 7px; background: #c8c8c8; }
.plus { margin-left: 51px; margin-top: -1px; }
.hs { margin-left: auto; margin-right: 25px; width: 745px; display: flex; align-items: center; margin-top: 0; }
.kebab { width: 3px; height: 14px; margin: 0 11px 0 4px; background: radial-gradient(circle, #333 1.300px, transparent 1.500px) 0 0 / 3px 5px repeat-y; }
.htrack { flex: 1; height: 20px; background: #f7f7f7; border-radius: 10px; display: flex; align-items: center; padding: 0 4px 0 9px; margin-left: 5px; }
.hthumb { width: 563px; height: 11px; margin-left: 8px; background: #6e6e6e; border-radius: 6px; }
.hr { margin-left: auto; }

/* status bar */
.status { height: 29px; flex: none; background: #f4f4f4; display: flex; align-items: center; font-size: 14px; padding-left: 15px; position: relative; }
.ready { width: 29px; white-space: nowrap; color: #444; padding-bottom: 2px; }
.st-ic { margin-left: 25px; }
.st-acc { margin-left: 22px; }
.acc { font-weight: 700; margin-left: 5px; color: #444; padding-bottom: 2px; }
.views { margin-left: auto; display: flex; position: absolute; left: 1540px; top: 2px; }
.vw { width: 50px; height: 25px; display: flex; align-items: center; justify-content: center; }
.vw.sel { background: #d9d9d9; width: 49px; }
.zoomer { position: absolute; left: 1698px; top: 0; height: 29px; width: 222px; display: flex; align-items: center; color: #666; font-size: 14px; }
.ztrack { position: relative; display: block; width: 130px; height: 1px; margin: 0 3px 0 10px; background: #777; }
.zknob { position: absolute; left: 62px; top: -8px; width: 3px; height: 17px; background: #777; }
.pct { margin-left: 17px; color: #999; }
.bottom { flex: 1; background: #ececec; position: relative; padding-left: 60px; }
.bottom-panel { width: 359px; height: 100%; background: #fff; border: 1px solid #ccc; border-bottom: 0; border-radius: 3px 3px 0 0; }

/* menus */
.menu { position: absolute; background: #fff; font-size: 15.300px; color: #444; line-height: 20px; }
.m-main { left: 26px; top: 198px; width: 173px; height: 399px; padding: 1px 0; border: 1px solid #555; box-shadow: 0 1px 3px rgba(0, 0, 0, .25); border-bottom-color: #888; }
.mi { height: 36px; display: flex; align-items: center; padding-left: 14px; white-space: nowrap; position: relative; }
.mi span { margin-left: 11px; padding-bottom: 2px; }
.mc { position: absolute; left: 151px; top: 9px; }
.mi.hov { background: #f3f3f3; }
.m-sub { left: 198px; top: 381px; width: 219px; height: 281px; padding-top: 2px; box-shadow: 0 1px 4px rgba(0, 0, 0, .3); }
.si { height: 60px; display: flex; align-items: center; padding-left: 20px; position: relative; white-space: nowrap; }
.si.hov { background: #f5f5f5; margin-right: 2px; height: 59px; }
.si > span { margin-left: 18px; padding-bottom: 2px; }
.eb { position: relative; width: 37px; height: 35px; }
.ex { position: absolute; left: 25px; top: -5px; display: block; }
.pc { left: 18px; top: -8px; font: 400 14px/16px "Open Sans", sans-serif; color: #555; }
.sg { left: 24px; top: -10px; font: 400 20px/20px "Open Sans", sans-serif; color: #555; }
.si.more { border-top: 1px solid #ddd; height: 40px; padding: 0 0 2px 46px; margin-top: 0; }

/* annotation & watermark overlays */
.notes { position: absolute; left: 0; top: 0; pointer-events: none; }
.wm { position: absolute; inset: 0; pointer-events: none; }
.wm > * { position: absolute; }
.paw { left: 1575px; top: 825px; }
.bai, .du { font: 700 84px/80px "Liberation Sans", sans-serif; color: rgba(255, 255, 255, .8); -webkit-text-stroke: 2px #cfcfcf; }
.bai { left: 1475px; top: 872px; letter-spacing: 3px; }
.du { left: 1614px; top: 872px; font-size: 60px; line-height: 80px; }
.jy { left: 1694px; top: 872px; font: 700 58px/72px "Noto Sans CJK SC", sans-serif; color: rgba(255, 255, 255, .8); -webkit-text-stroke: 2px #cfcfcf; }
.url { left: 1475px; top: 947px; font: 400 43px/54px "Liberation Sans", sans-serif; color: rgba(255, 255, 255, .85); -webkit-text-stroke: 1.200px #c4c4c4; white-space: nowrap; }
.corner-wash { left: 1720px; top: 1003px; width: 200px; height: 36px; background: rgba(255, 255, 255, .5); }
.leaf { left: 1794px; top: 959px; }
.brand { left: 1760px; top: 975px; font: 700 22px/30px "Noto Sans CJK SC", sans-serif; white-space: nowrap; display: flex; }
.b7 { color: #3f5a33; }
.bg { color: #6cb33f; }
.brandsub { left: 1788px; top: 1003px; font: 7px/9px "Liberation Serif", serif; color: #444; }
.clock { left: 1790px; top: 1030px; font-size: 12px; line-height: 14px; color: #555; }
```
